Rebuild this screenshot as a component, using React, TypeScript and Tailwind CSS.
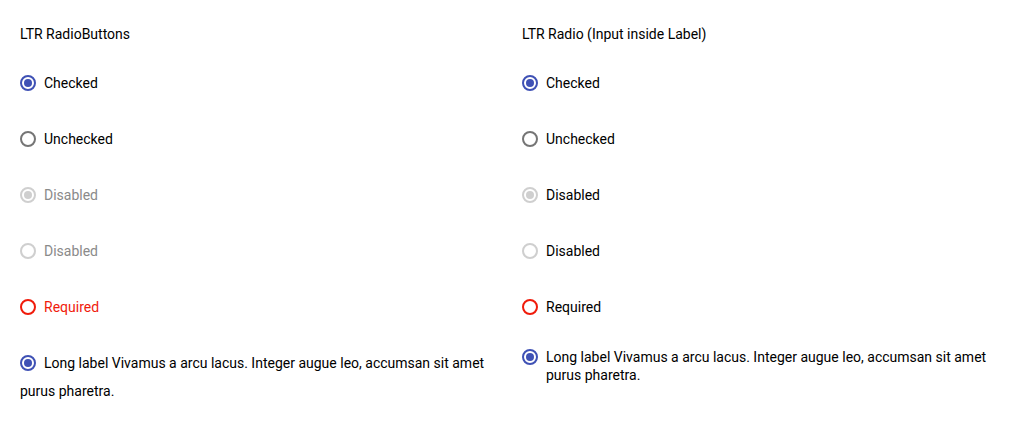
type Variant = 'checked' | 'unchecked' | 'disabledChecked' | 'disabled' | 'required';

function Radio({ variant, className = '' }: { variant: Variant; className?: string }) {
  const ring =
    variant === 'checked'
      ? 'border-[#3f51b5]'
      : variant === 'unchecked'
        ? 'border-[#757575]'
        : variant === 'required'
          ? 'border-[#f01b0b]'
          : 'border-[#cfcfcf]';
  const dot =
    variant === 'checked' ? 'bg-[#3f51b5]' : variant === 'disabledChecked' ? 'bg-[#cfcfcf]' : '';
  return (
    <span
      className={`inline-flex items-center justify-center w-4 h-4 rounded-full border-2 shrink-0 ${ring} ${className}`}
    >
      {dot && <span className={`block w-2 h-2 rounded-full ${dot}`} />}
    </span>
  );
}

const items: { variant: Variant; label: string }[] = [
  { variant: 'checked', label: 'Checked' },
  { variant: 'unchecked', label: 'Unchecked' },
  { variant: 'disabledChecked', label: 'Disabled' },
  { variant: 'disabled', label: 'Disabled' },
  { variant: 'required', label: 'Required' },
];

const longLabel = 'Long label Vivamus a arcu lacus. Integer augue leo, accumsan sit amet purus pharetra.';

export default function App() {
  return (
    <div
      className="grid grid-cols-2 gap-5 px-5 pt-6 bg-white text-black text-sm"
      style={{ fontFamily: 'Roboto, "Liberation Sans", sans-serif' }}
    >
      {/* standalone radio buttons */}
      <div>
        <div className="leading-5 mb-[11px]">LTR RadioButtons</div>
        {items.map(({ variant, label }, i) => {
          const color =
            variant === 'disabled' || variant === 'disabledChecked'
              ? 'text-[#8a8a8a]'
              : variant === 'required'
                ? 'text-[#f01b0b]'
                : 'text-black';
          return (
            <div key={i} className="flex items-center gap-2 h-14">
              <Radio variant={variant} />
              <span className={color}>{label}</span>
            </div>
          );
        })}
        <div className="py-[14px] leading-7">
          <Radio variant="checked" className="align-middle mr-2 -mt-[3px]" />
          {longLabel}
        </div>
      </div>

      {/* input inside label */}
      <div>
        <div className="leading-5 mb-[11px]">LTR Radio (Input inside Label)</div>
        {items.map(({ variant, label }, i) => (
          <label key={i} className="flex items-center gap-2 h-14">
            <Radio variant={variant} />
            <span>{label}</span>
          </label>
        ))}
        <label className="flex items-start gap-2 pt-[13px] leading-[18px]">
          <Radio variant="checked" className="mt-px" />
          <span>{longLabel}</span>
        </label>
      </div>
    </div>
  );
}
